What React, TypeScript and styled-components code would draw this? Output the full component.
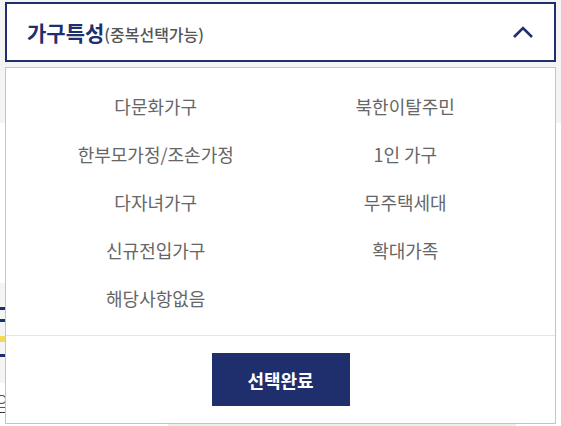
import React, { FC } from "react";
import styled, { createGlobalStyle } from "styled-components";

const options = [
  "다문화가구",
  "북한이탈주민",
  "한부모가정/조손가정",
  "1인 가구",
  "다자녀가구",
  "무주택세대",
  "신규전입가구",
  "확대가족",
  "해당사항없음",
];

const GlobalStyle = createGlobalStyle`
  * { box-sizing: border-box; }
  html, body {
    margin: 0;
    padding: 0;
    background: #ffffff;
    font-family: "Noto Sans CJK KR", "Noto Sans", sans-serif;
  }
`;

const App: FC = () => {
  return (
    <Page>
      <GlobalStyle />

      {/* page content behind the opened dropdown */}
      <Backdrop>
        <TopBand />
        <div />
        <SideCard>
          <Bar $color="#1f2f6e" $height={3} $gap={0} />
          <Bar $color="#1f2f6e" $height={3} $gap={9} />
          <Bar $color="#f5d75a" $height={6} $gap={14} />
          <Bar $color="#1f2f6e" $height={3} $gap={12} />
        </SideCard>
        <BottomRow>
          <SideLabel>으</SideLabel>
          <GreenStrip />
        </BottomRow>
      </Backdrop>

      <Dropdown>
        <Header>
          <Title>
            가구특성<Sub>(중복선택가능)</Sub>
          </Title>
          <svg width="22" height="14" viewBox="0 0 22 14">
            <path
              d="M2 12 L11 3 L20 12"
              fill="none"
              stroke="#1f2f6e"
              strokeWidth="2.6"
            />
          </svg>
        </Header>

        <Panel>
          <OptionGrid>
            {options.map((label) => (
              <OptionItem key={label}>{label}</OptionItem>
            ))}
          </OptionGrid>
          <Footer>
            <DoneButton type="button">선택완료</DoneButton>
          </Footer>
        </Panel>
      </Dropdown>
    </Page>
  );
};

const Page = styled.div`
  position: relative;
  width: 561px;
  height: 426px;
  overflow: hidden;
`;

const Backdrop = styled.div`
  display: grid;
  grid-template-rows: 123px 160px 100px 43px;
`;

const TopBand = styled.div`
  background: #f4f4f4;
`;

const SideCard = styled.div`
  width: 40px;
  background: #f4f4f4;
  display: flex;
  flex-direction: column;
  padding-top: 24px;
`;

const Bar = styled.div<{ $color: string; $height: number; $gap: number }>`
  width: 8px;
  height: ${({ $height }) => $height}px;
  margin-top: ${({ $gap }) => $gap}px;
  background: ${({ $color }) => $color};
`;

const BottomRow = styled.div`
  display: flex;
  align-items: flex-end;
  justify-content: space-between;
  padding-right: 45px;
`;

const SideLabel = styled.div`
  align-self: flex-start;
  margin: 7px 0 0 -6px;
  font-size: 16px;
  color: #555;
  border-bottom: 1px solid #333;
  line-height: 22px;
`;

const GreenStrip = styled.div`
  width: 348px;
  height: 4px;
  background: #e4f2ec;
`;

const Dropdown = styled.div`
  position: absolute;
  left: 5px;
  top: 2px;
  width: 551px;
  display: flex;
  flex-direction: column;
  gap: 5px;
`;

const Header = styled.div`
  height: 60px;
  border: 2px solid #1f2f6e;
  background: #fff;
  display: flex;
  align-items: center;
  justify-content: space-between;
  padding: 0 20px;
`;

const Title = styled.div`
  font-size: 21px;
  font-weight: 700;
  color: #1f2f6e;
  display: flex;
  align-items: baseline;
`;

const Sub = styled.span`
  font-size: 16px;
  font-weight: 500;
  color: #555;
`;

const Panel = styled.div`
  border: 1px solid #c4c4c4;
  background: #fff;
  display: flex;
  flex-direction: column;
`;

const OptionGrid = styled.div`
  display: grid;
  grid-template-columns: 1fr 1fr;
  padding: 14px 25px 13px;
`;

const OptionItem = styled.div`
  text-align: center;
  font-size: 18px;
  line-height: 24px;
  padding: 12px 0;
  color: #666;
  cursor: pointer;
`;

const Footer = styled.div`
  border-top: 1px solid #e5e5e5;
  display: flex;
  justify-content: center;
  padding: 17px 0;
`;

const DoneButton = styled.button`
  width: 138px;
  height: 53px;
  border: none;
  background: #1f2f6e;
  color: #fff;
  font-family: inherit;
  font-size: 18px;
  font-weight: 700;
  cursor: pointer;
`;

export default App;
